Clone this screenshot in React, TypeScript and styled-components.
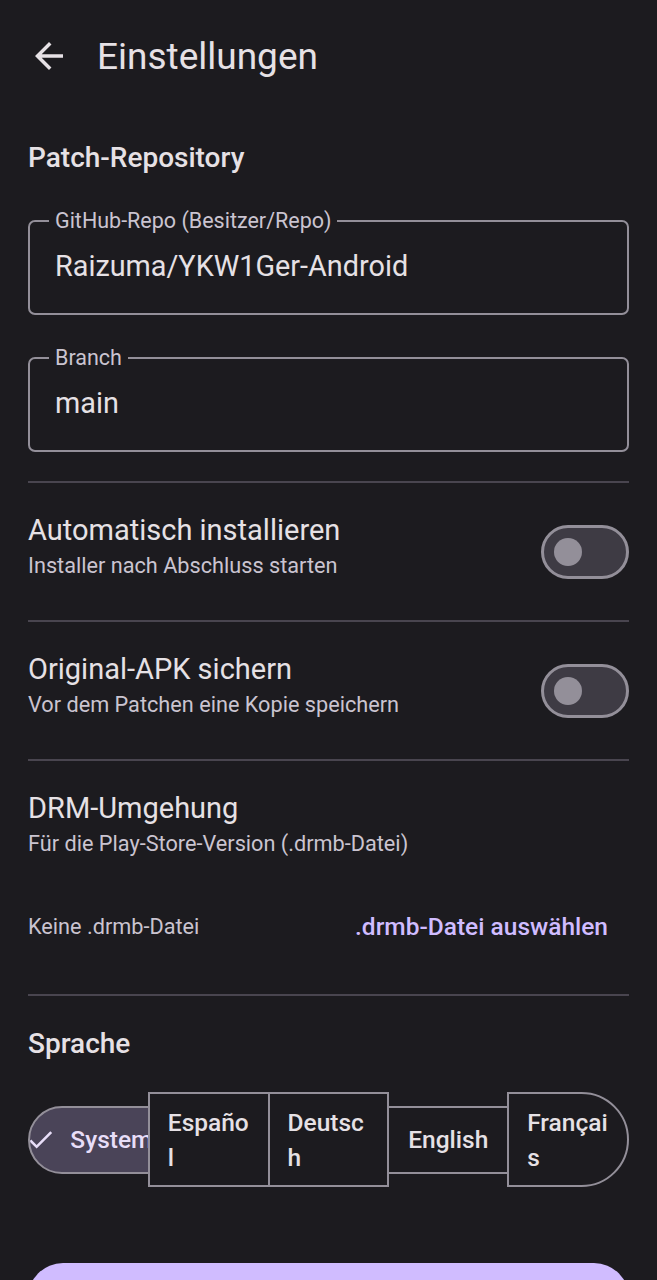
import React from "react";
import styled, { createGlobalStyle } from "styled-components";

const colors = {
    background: "#1c1b1f",
    onSurface: "#e6e1e5",
    onSurfaceVariant: "#cac4d0",
    outline: "#938f99",
    outlineVariant: "#49454f",
    primary: "#d0bcff",
    secondaryContainer: "#4a4458",
    onSecondaryContainer: "#e8def8",
    track: "#3e3b44",
};

const GlobalStyle = createGlobalStyle`
    html, body {
        margin: 0;
        background-color: ${colors.background};
    }
    body {
        font-family: Roboto, "Noto Sans", sans-serif;
        color: ${colors.onSurface};
    }
    * {
        box-sizing: border-box;
    }
`;

const Page = styled.div`
    min-height: 1280px;
    background-color: ${colors.background};
`;

const TopBar = styled.header`
    height: 112px;
    display: flex;
    align-items: center;
`;

const IconButton = styled.button`
    width: 84px;
    height: 84px;
    margin-left: 7px;
    display: flex;
    align-items: center;
    justify-content: center;
    border: none;
    background: none;
    padding: 0;
    color: ${colors.onSurface};
`;

const Title = styled.h1`
    margin: 0 0 0 6px;
    font-size: 37px;
    font-weight: 400;
    color: ${colors.onSurface};
`;

const Content = styled.main`
    padding: 0 28px;
    display: flex;
    flex-direction: column;
`;

const SectionTitle = styled.h2<{ $top: number }>`
    margin: ${(p) => p.$top}px 0 0;
    font-size: 28px;
    line-height: 42px;
    font-weight: 500;
    color: ${colors.onSurface};
`;

const Field = styled.fieldset<{ $top: number }>`
    margin: ${(p) => p.$top}px 0 0;
    padding: 16px 25px 29px;
    border: 2px solid ${colors.outline};
    border-radius: 7px;
    min-width: 0;
`;

const FieldLabel = styled.legend`
    margin-left: -6px;
    padding: 0 6px;
    font-size: 21.5px;
    line-height: 24px;
    color: ${colors.onSurfaceVariant};
`;

const FieldValue = styled.div`
    font-size: 28.8px;
    line-height: 35px;
    color: ${colors.onSurface};
`;

const Divider = styled.hr<{ $top: number }>`
    margin: ${(p) => p.$top}px 0 0;
    border: none;
    height: 2px;
    background-color: ${colors.outlineVariant};
`;

const SettingRow = styled.div`
    display: flex;
    align-items: center;
    justify-content: space-between;
`;

const SettingText = styled.div<{ $bottom?: number }>`
    padding: 30px 0 ${(p) => p.$bottom ?? 37}px;
    display: flex;
    flex-direction: column;
`;

const SettingTitle = styled.div`
    font-size: 29px;
    line-height: 35px;
    color: ${colors.onSurface};
`;

const SettingCaption = styled.div`
    font-size: 21.7px;
    line-height: 35px;
    color: ${colors.onSurfaceVariant};
`;

const SwitchTrack = styled.div`
    width: 88px;
    height: 54px;
    border-radius: 27px;
    border: 3px solid ${colors.outline};
    background-color: ${colors.track};
    display: flex;
    align-items: center;
    padding-left: 10px;
`;

const SwitchThumb = styled.div`
    width: 28px;
    height: 28px;
    border-radius: 50%;
    background-color: ${colors.outline};
`;

const FileRow = styled.div`
    margin-top: 30px;
    height: 70px;
    display: flex;
    align-items: center;
    justify-content: space-between;
`;

const FileHint = styled.span`
    font-size: 21.7px;
    color: ${colors.onSurfaceVariant};
`;

const TextButton = styled.button`
    height: 70px;
    padding: 0 21px;
    border: none;
    background: none;
    font-family: inherit;
    font-size: 24.5px;
    font-weight: 500;
    color: ${colors.primary};
    border-radius: 35px;
`;

const SegmentRow = styled.div`
    margin-top: 27px;
    display: flex;
    align-items: center;
`;

const Segment = styled.button<{ $selected?: boolean; $first?: boolean; $last?: boolean }>`
    flex: 1 1 0;
    min-width: 0;
    min-height: 68px;
    margin-left: ${(p) => (p.$first ? 0 : -2)}px;
    padding: 10.5px 18px;
    display: flex;
    align-items: center;
    justify-content: center;
    gap: 14px;
    overflow: hidden;
    border: 2px solid ${colors.outline};
    border-radius: ${(p) => (p.$first ? "999px 0 0 999px" : p.$last ? "0 999px 999px 0" : "0")};
    background-color: ${(p) => (p.$selected ? colors.secondaryContainer : colors.background)};
    color: ${(p) => (p.$selected ? colors.onSecondaryContainer : colors.onSurface)};
    font-family: inherit;
    font-size: 24.5px;
    line-height: 35px;
    font-weight: 500;
    text-align: left;
`;

const SegmentLabel = styled.span<{ $nowrap?: boolean }>`
    flex-shrink: ${(p) => (p.$nowrap ? 0 : 1)};
    min-width: 0;
    white-space: ${(p) => (p.$nowrap ? "nowrap" : "normal")};
    word-break: break-all;
`;

const CheckIcon = styled.svg`
    width: 31px;
    height: 31px;
    flex-shrink: 0;
`;

const PrimaryButton = styled.button`
    margin-top: 76px;
    height: 70px;
    border: none;
    border-radius: 35px;
    background-color: ${colors.primary};
`;

const languages = ["System", "Español", "Deutsch", "English", "Français"];

function Toggle() {
    return (
        <SwitchTrack>
            <SwitchThumb />
        </SwitchTrack>
    );
}

export default function App() {
    return (
        <Page>
            <GlobalStyle />
            <TopBar>
                <IconButton aria-label="Zurück">
                    <svg width="42" height="42" viewBox="0 0 24 24" fill="currentColor">
                        <path d="M20 11H7.83l5.59-5.59L12 4l-8 8 8 8 1.41-1.41L7.83 13H20v-2z" />
                    </svg>
                </IconButton>
                <Title>Einstellungen</Title>
            </TopBar>
            <Content>
                <SectionTitle $top={25}>Patch-Repository</SectionTitle>
                <Field $top={30}>
                    <FieldLabel>GitHub-Repo (Besitzer/Repo)</FieldLabel>
                    <FieldValue>Raizuma/YKW1Ger-Android</FieldValue>
                </Field>
                <Field $top={31}>
                    <FieldLabel>Branch</FieldLabel>
                    <FieldValue>main</FieldValue>
                </Field>
                <Divider $top={29} />
                <SettingRow>
                    <SettingText>
                        <SettingTitle>Automatisch installieren</SettingTitle>
                        <SettingCaption>Installer nach Abschluss starten</SettingCaption>
                    </SettingText>
                    <Toggle />
                </SettingRow>
                <Divider $top={0} />
                <SettingRow>
                    <SettingText>
                        <SettingTitle>Original-APK sichern</SettingTitle>
                        <SettingCaption>Vor dem Patchen eine Kopie speichern</SettingCaption>
                    </SettingText>
                    <Toggle />
                </SettingRow>
                <Divider $top={0} />
                <SettingText $bottom={0}>
                    <SettingTitle>DRM-Umgehung</SettingTitle>
                    <SettingCaption>Für die Play-Store-Version (.drmb-Datei)</SettingCaption>
                </SettingText>
                <FileRow>
                    <FileHint>Keine .drmb-Datei</FileHint>
                    <TextButton>.drmb-Datei auswählen</TextButton>
                </FileRow>
                <Divider $top={33} />
                <SectionTitle $top={27}>Sprache</SectionTitle>
                <SegmentRow>
                    {languages.map((lang, i) => {
                        const selected = i === 0;
                        return (
                            <Segment
                                key={lang}
                                $selected={selected}
                                $first={i === 0}
                                $last={i === languages.length - 1}
                            >
                                {selected && (
                                    <CheckIcon viewBox="0 0 24 24" fill="currentColor">
                                        <path d="M9 16.17L4.83 12l-1.42 1.41L9 19 21 7l-1.41-1.41z" />
                                    </CheckIcon>
                                )}
                                <SegmentLabel $nowrap={selected}>{lang}</SegmentLabel>
                            </Segment>
                        );
                    })}
                </SegmentRow>
                <PrimaryButton />
            </Content>
        </Page>
    );
}
